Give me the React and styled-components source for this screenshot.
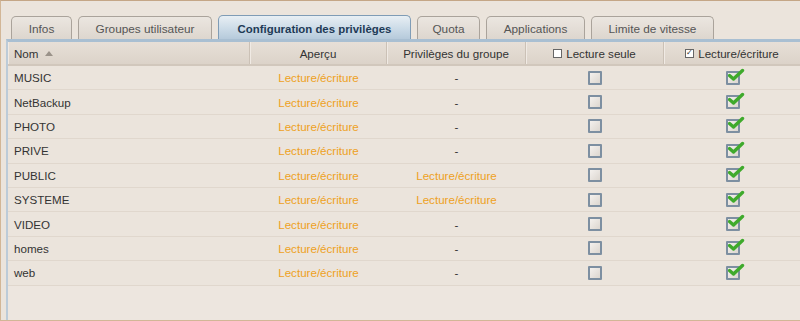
import React from "react";
import styled, { createGlobalStyle } from "styled-components";

const Global = createGlobalStyle`
  html, body { margin: 0; padding: 0; background: #ebe4dc; }
  body { font-family: "Liberation Sans", Arial, sans-serif; font-size: 11.6px; color: #333; }
`;

const Frame = styled.div`
  box-sizing: border-box;
  width: 800px;
  height: 321px;
  border-top: 1px solid #c4a686;
  border-left: 1px solid #d2b696;
  border-bottom: 1px solid #d2b696;
  background: #ebe4dc;
  padding: 14px 0 0 5px;
  display: flex;
  flex-direction: column;
`;

const TabBar = styled.div`
  display: flex;
  align-items: flex-end;
  gap: 6px;
  padding-left: 5px;
  height: 24px;
`;

const Tab = styled.div`
  box-sizing: border-box;
  width: ${({ w }) => w}px;
  height: ${({ active }) => (active ? 24 : 23)}px;
  border: 1px solid ${({ active }) => (active ? "#7f9cb6" : "#aaa39b")};
  border-bottom: none;
  border-radius: 5px 5px 0 0;
  background: ${({ active }) =>
    active
      ? "linear-gradient(#e8eff4, #c9d9e6 60%, #b6cadb)"
      : "linear-gradient(#ebe6e0, #ddd6ce)"};
  color: ${({ active }) => (active ? "#1e3a56" : "#555")};
  font-weight: ${({ active }) => (active ? "bold" : "normal")};
  font-size: ${({ active }) => (active ? "11.4px" : "11.8px")};
  display: flex;
  align-items: center;
  justify-content: center;
  padding-top: 2px;
`;

const Panel = styled.div`
  flex: 1;
  border-top: 3px solid #a9bfd2;
  border-left: 2px solid #bccbd8;
  background: #ede6df;
`;

const cols = "242px 137px 139px 138px 1fr";

const HeaderRow = styled.div`
  box-sizing: border-box;
  display: grid;
  grid-template-columns: ${cols};
  height: 24px;
  background: linear-gradient(#e7dfd7, #dcd3c9);
  border-bottom: 2px solid #d1c7bc;
`;

const HeadCell = styled.div`
  display: flex;
  align-items: center;
  justify-content: ${({ left }) => (left ? "flex-start" : "center")};
  padding-left: ${({ left }) => (left ? "6px" : "0")};
  border-right: 1px solid #cbc1b6;
  box-shadow: inset 1px 0 0 #f0eae4;
  color: #333;
  gap: 4px;
  &:last-child { border-right: none; }
`;

const SortArrow = styled.span`
  width: 0;
  height: 0;
  border-left: 4px solid transparent;
  border-right: 4px solid transparent;
  border-bottom: 5px solid #9a9289;
  margin-left: 3px;
`;

const MiniBox = styled.span`
  box-sizing: border-box;
  width: 9px;
  height: 9px;
  border: 1px solid #666;
  background: #fff;
  display: inline-flex;
  align-items: center;
  justify-content: center;
  font-size: 8px;
  line-height: 1;
  color: #333;
`;

const Row = styled.div`
  box-sizing: border-box;
  display: grid;
  grid-template-columns: ${cols};
  height: 24.4px;
  border-bottom: 1px solid #e0d7cd;
  background: #ebe4dc;
`;

const Cell = styled.div`
  display: flex;
  align-items: center;
  justify-content: ${({ left }) => (left ? "flex-start" : "center")};
  padding-left: ${({ left }) => (left ? "6px" : "0")};
  color: ${({ orange }) => (orange ? "#eea11c" : "#333")};
`;

const Box = styled.span`
  position: relative;
  box-sizing: border-box;
  width: 14px;
  height: 14px;
  border: 2px solid #7d8fa1;
  border-radius: 1px;
  background: linear-gradient(135deg, #f4f1ee, #dcd6cf);
  margin-left: ${({ shift }) => shift || 0}px;
`;

const Tick = styled.svg`
  position: absolute;
  left: 0px;
  top: -5px;
`;

const Check = ({ checked }) => (
  <Box shift={checked ? 2 : 0}>
    {checked && (
      <Tick width="17" height="14" viewBox="0 0 17 14">
        <path d="M1.5 7.5 L5.5 11 L14.5 2.5" fill="none" stroke="#3faa2c" strokeWidth="3.4" strokeLinecap="round" strokeLinejoin="round" />
      </Tick>
    )}
  </Box>
);

const tabs = [
  ["Infos", 61],
  ["Groupes utilisateur", 134],
  ["Configuration des privilèges", 193],
  ["Quota", 63],
  ["Applications", 99],
  ["Limite de vitesse", 123],
];

const rows = [
  ["MUSIC", "-"],
  ["NetBackup", "-"],
  ["PHOTO", "-"],
  ["PRIVE", "-"],
  ["PUBLIC", "Lecture/écriture"],
  ["SYSTEME", "Lecture/écriture"],
  ["VIDEO", "-"],
  ["homes", "-"],
  ["web", "-"],
];

export default function App() {
  return (
    <Frame>
      <Global />
      <TabBar>
        {tabs.map(([t, w], i) => (
          <Tab key={t} w={w} active={i === 2}>
            {t}
          </Tab>
        ))}
      </TabBar>
      <Panel>
        <HeaderRow>
          <HeadCell left>
            Nom <SortArrow />
          </HeadCell>
          <HeadCell>Aperçu</HeadCell>
          <HeadCell>Privilèges du groupe</HeadCell>
          <HeadCell>
            <MiniBox /> Lecture seule
          </HeadCell>
          <HeadCell>
            <MiniBox>✓</MiniBox> Lecture/écriture
          </HeadCell>
        </HeaderRow>
        {rows.map(([name, group]) => (
          <Row key={name}>
            <Cell left>{name}</Cell>
            <Cell orange>Lecture/écriture</Cell>
            <Cell orange={group !== "-"}>{group}</Cell>
            <Cell>
              <Check />
            </Cell>
            <Cell>
              <Check checked />
            </Cell>
          </Row>
        ))}
      </Panel>
    </Frame>
  );
}
